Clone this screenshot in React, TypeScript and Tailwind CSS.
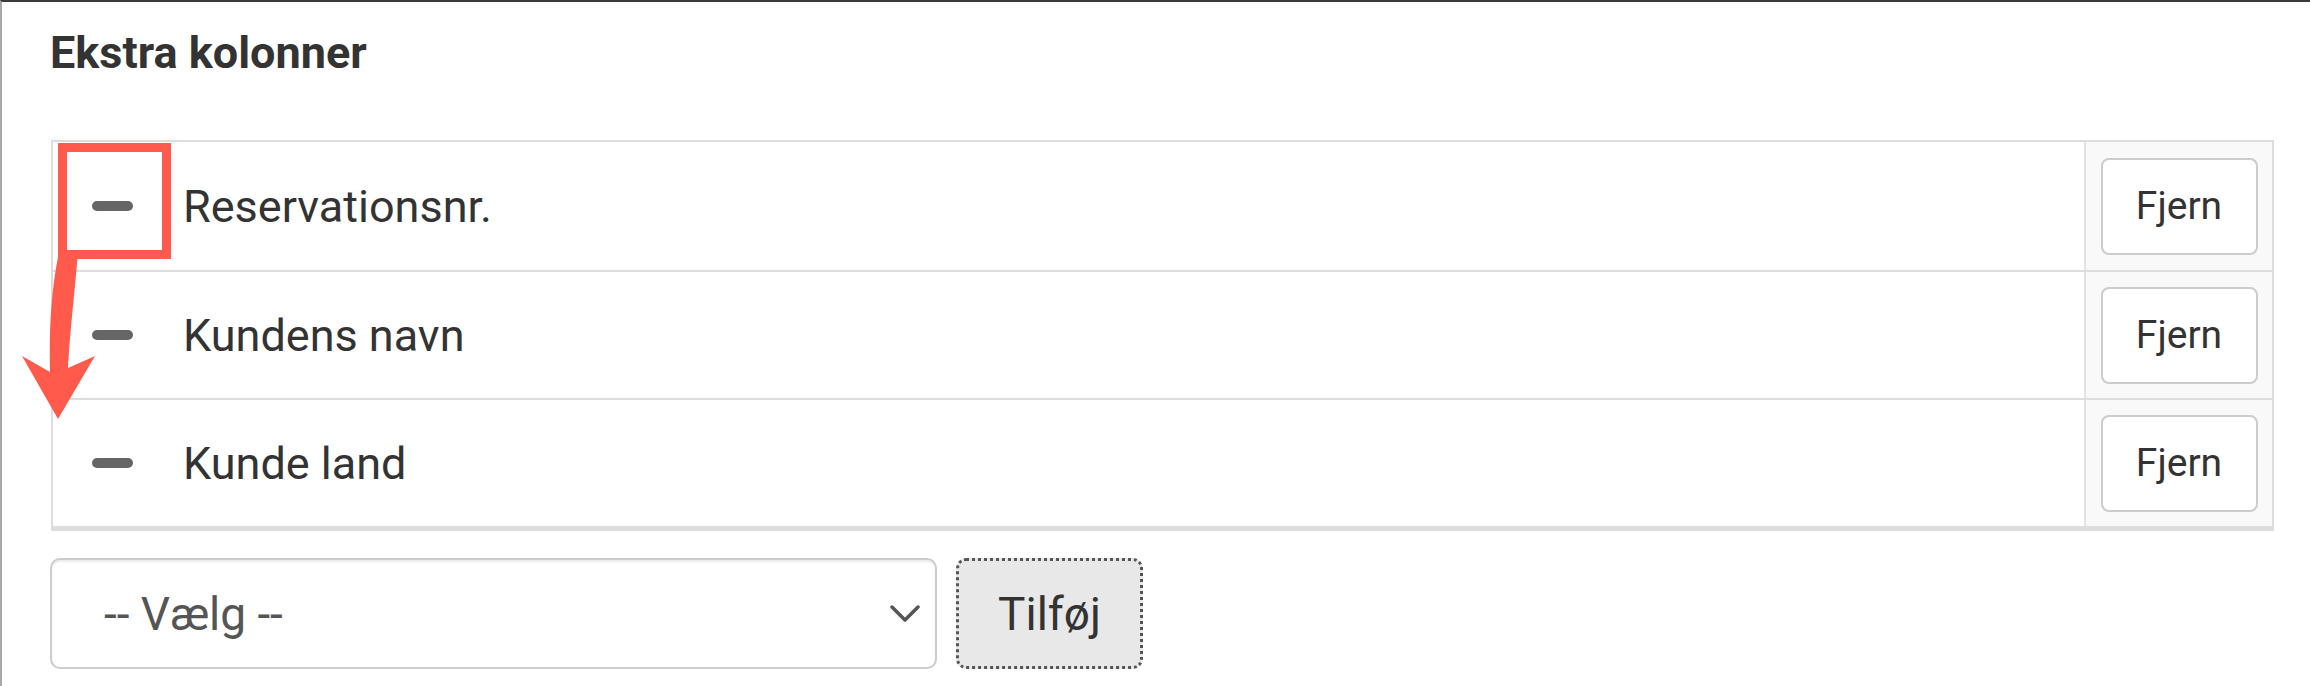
import React from "react";

const rows = ["Reservationsnr.", "Kundens navn", "Kunde land"];

function Row({ label, first }: { label: string; first: boolean }) {
  return (
    <div
      className={
        "flex h-[128px] border-[#dddddd] " + (first ? "" : "border-t-2")
      }
    >
      <div className="flex flex-1 items-center bg-white pl-[39px]">
        <div className="h-[10px] w-[41px] rounded-full bg-[#666666]" />
        <span className="ml-[50px] text-[45px] leading-none text-[#333333]">
          {label}
        </span>
      </div>
      <div className="flex w-[188px] items-center justify-center border-l-2 border-[#e2e2e2] bg-[#f9f9f9]">
        <button className="flex h-[97px] w-[157px] items-center justify-center rounded-[8px] border-2 border-[#cccccc] bg-white text-[39px] leading-none text-[#333333]">
          Fjern
        </button>
      </div>
    </div>
  );
}

export default function App() {
  return (
    <div className="relative h-[686px] w-[2310px] overflow-hidden border-l-2 border-t-2 border-l-[#a8a8a8] border-t-[#3a3a3a] bg-white font-['Roboto',sans-serif]">
      <div className="pl-[48px] pr-[36px] pt-[28px]">
        <h2 className="text-[45px] font-bold leading-[45px] text-[#333333]">
          Ekstra kolonner
        </h2>
        <div className="ml-px mt-[65px] border-b-[5px] border-l-2 border-r-2 border-t-2 border-[#dddddd]">
          {rows.map((r, i) => (
            <Row key={r} label={r} first={i === 0} />
          ))}
        </div>
        <div className="mt-[27px] flex items-center">
          <div className="flex h-[111px] w-[887px] items-center justify-between rounded-[10px] border-2 border-[#cccccc] bg-white pl-[52px] pr-[15px] shadow-[inset_0_2px_2px_rgba(0,0,0,0.08)]">
            <span className="text-[46px] leading-none text-[#555555]">
              -- Vælg --
            </span>
            <svg width="30" height="20" viewBox="0 0 30 20" fill="none">
              <path
                d="M2 3 L15 16 L28 3"
                stroke="#555555"
                strokeWidth="3.5"
                strokeLinecap="round"
                strokeLinejoin="round"
              />
            </svg>
          </div>
          <button className="ml-[19px] flex h-[111px] w-[187px] items-center justify-center rounded-[10px] border-[3px] border-dotted border-[#555555] bg-[#e8e8e8] text-[46px] leading-none text-[#333333]">
            Tilføj
          </button>
        </div>
      </div>

      <svg
        className="pointer-events-none absolute left-[-2px] top-[-2px]"
        width="200"
        height="440"
        viewBox="0 0 200 440"
      >
        <rect
          x="62.5"
          y="147.5"
          width="104"
          height="107"
          fill="none"
          stroke="#ff5a4b"
          strokeWidth="9"
        />
        <path
          d="M59 252 L78 252 C 75 290, 70 330, 68 368 L 95 356 L 58 419 L 22 356 L 50 372 C 49 330, 51 290, 59 252 Z"
          fill="#ff5a4b"
        />
      </svg>
    </div>
  );
}
